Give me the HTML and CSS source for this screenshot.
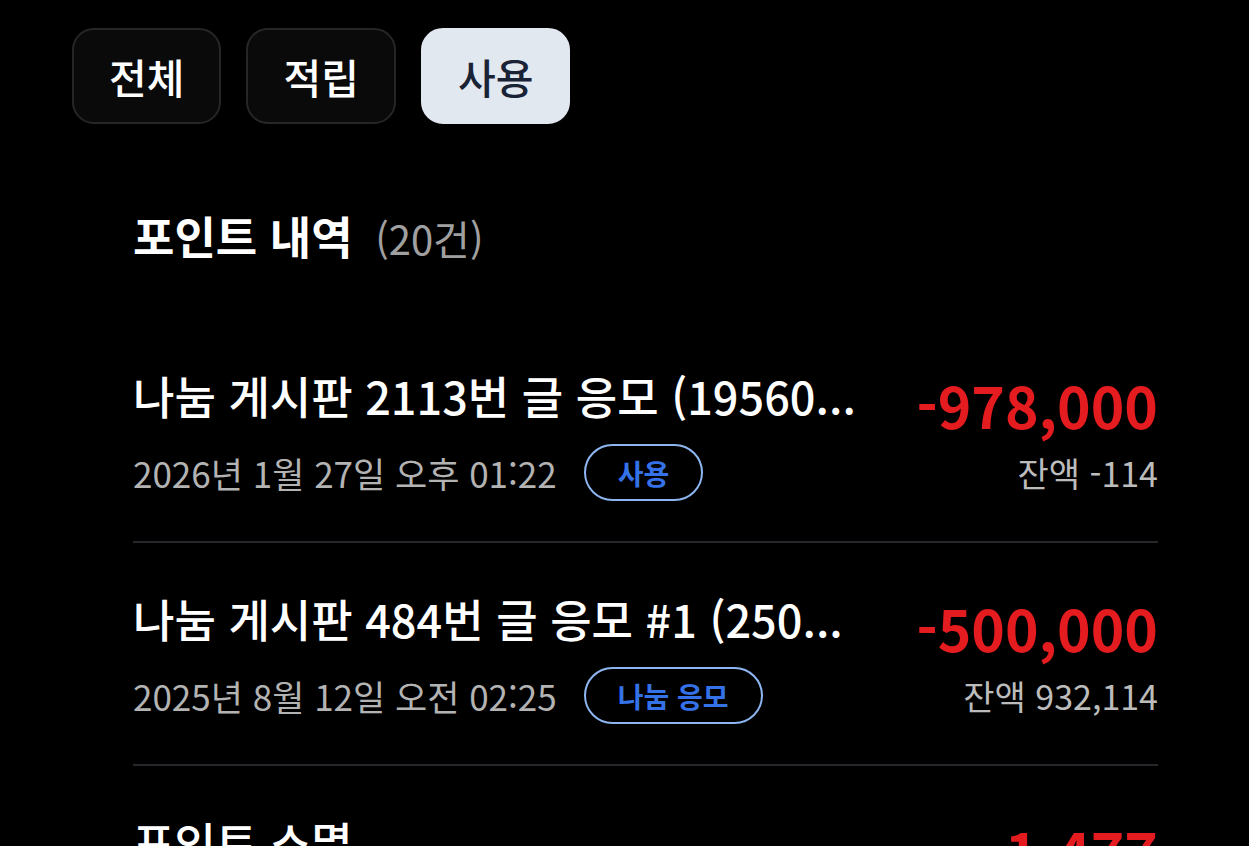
FILE: index.html
```html
<!DOCTYPE html>
<html lang="ko">
<head>
  <meta charset="UTF-8" />
  <meta name="viewport" content="width=device-width, initial-scale=1.0"/>
  <title>포인트 내역</title>
  <link rel="stylesheet" href="styles.css">
</head>
<body>
  <div class="page">
    <div class="tabs">
      <button class="tab">전체</button>
      <button class="tab">적립</button>
      <button class="tab active">사용</button>
    </div>

    <div class="history">
      <h2 class="history-title">포인트 내역 <span class="count">(20건)</span></h2>

      <ul class="list">
        <li class="item">
          <div class="row">
            <div class="name">나눔 게시판 2113번 글 응모 (19560...</div>
            <div class="amount">-978,000</div>
          </div>
          <div class="row sub">
            <div class="meta">
              <span class="date">2026년 1월 27일 오후 01:22</span>
              <span class="badge">사용</span>
            </div>
            <div class="balance">잔액 -114</div>
          </div>
        </li>
        <li class="item">
          <div class="row">
            <div class="name">나눔 게시판 484번 글 응모 #1 (250...</div>
            <div class="amount">-500,000</div>
          </div>
          <div class="row sub">
            <div class="meta">
              <span class="date">2025년 8월 12일 오전 02:25</span>
              <span class="badge">나눔 응모</span>
            </div>
            <div class="balance">잔액 932,114</div>
          </div>
        </li>
        <li class="item">
          <div class="row">
            <div class="name">포인트 소멸</div>
            <div class="amount">-1,477</div>
          </div>
          <div class="row sub">
            <div class="meta">
              <span class="date">2025년 8월 1일 오전 00:00</span>
              <span class="badge">소멸</span>
            </div>
            <div class="balance">잔액 1,432,114</div>
          </div>
        </li>
      </ul>
    </div>
  </div>
</body>
</html>
```

FILE: styles.css
```css
* {
  box-sizing: border-box;
}
html, body {
  height: 100%;
}
body {
  margin: 0;
  background: #000;
  color: #fff;
  font-family: "Noto Sans CJK KR", "Noto Sans", sans-serif;
  overflow: hidden;
}
.page {
  padding: 28px 72px;
}

/* filter tabs */
.tabs {
  display: flex;
  gap: 25px;
}
.tab {
  height: 96px;
  padding: 0 35px;
  border: 2px solid #262626;
  border-radius: 22px;
  background: #0a0a0a;
  color: #fff;
  font-family: inherit;
  font-size: 41px;
  font-weight: 500;
}
.tab.active {
  background: #e2e8f0;
  border-color: #e2e8f0;
  color: #1a2236;
}

/* history list */
.history {
  width: 1025px;
  margin-left: 61px;
}
.history-title {
  margin: 82px 0 0;
  font-size: 45px;
  font-weight: 700;
  line-height: 60px;
}
.count {
  margin-left: 10px;
  font-size: 40px;
  font-weight: 400;
  line-height: 1;
  color: #a0a0a0;
}
.list {
  list-style: none;
  margin: 54px 0 0;
  padding: 0;
}
.item {
  padding: 46px 0 40px;
  border-bottom: 2px solid #26262b;
}
.row {
  display: flex;
  align-items: flex-start;
  justify-content: space-between;
  gap: 40px;
}
.row.sub {
  align-items: center;
  margin-top: 2px;
}
.name {
  font-size: 45px;
  line-height: 60px;
  font-weight: 500;
  white-space: nowrap;
}
.amount {
  font-size: 57px;
  line-height: 76px;
  font-weight: 700;
  color: #e41b1f;
  white-space: nowrap;
}
.meta {
  display: flex;
  align-items: center;
  gap: 27px;
}
.date {
  font-size: 35px;
  color: #b3b3b3;
}
.badge {
  height: 57px;
  padding: 0 32px;
  display: flex;
  align-items: center;
  border: 2px solid #8db6f0;
  border-radius: 29px;
  font-size: 28px;
  font-weight: 700;
  color: #3572e8;
}
.balance {
  font-size: 34px;
  color: #bcbcbc;
  white-space: nowrap;
}
```
